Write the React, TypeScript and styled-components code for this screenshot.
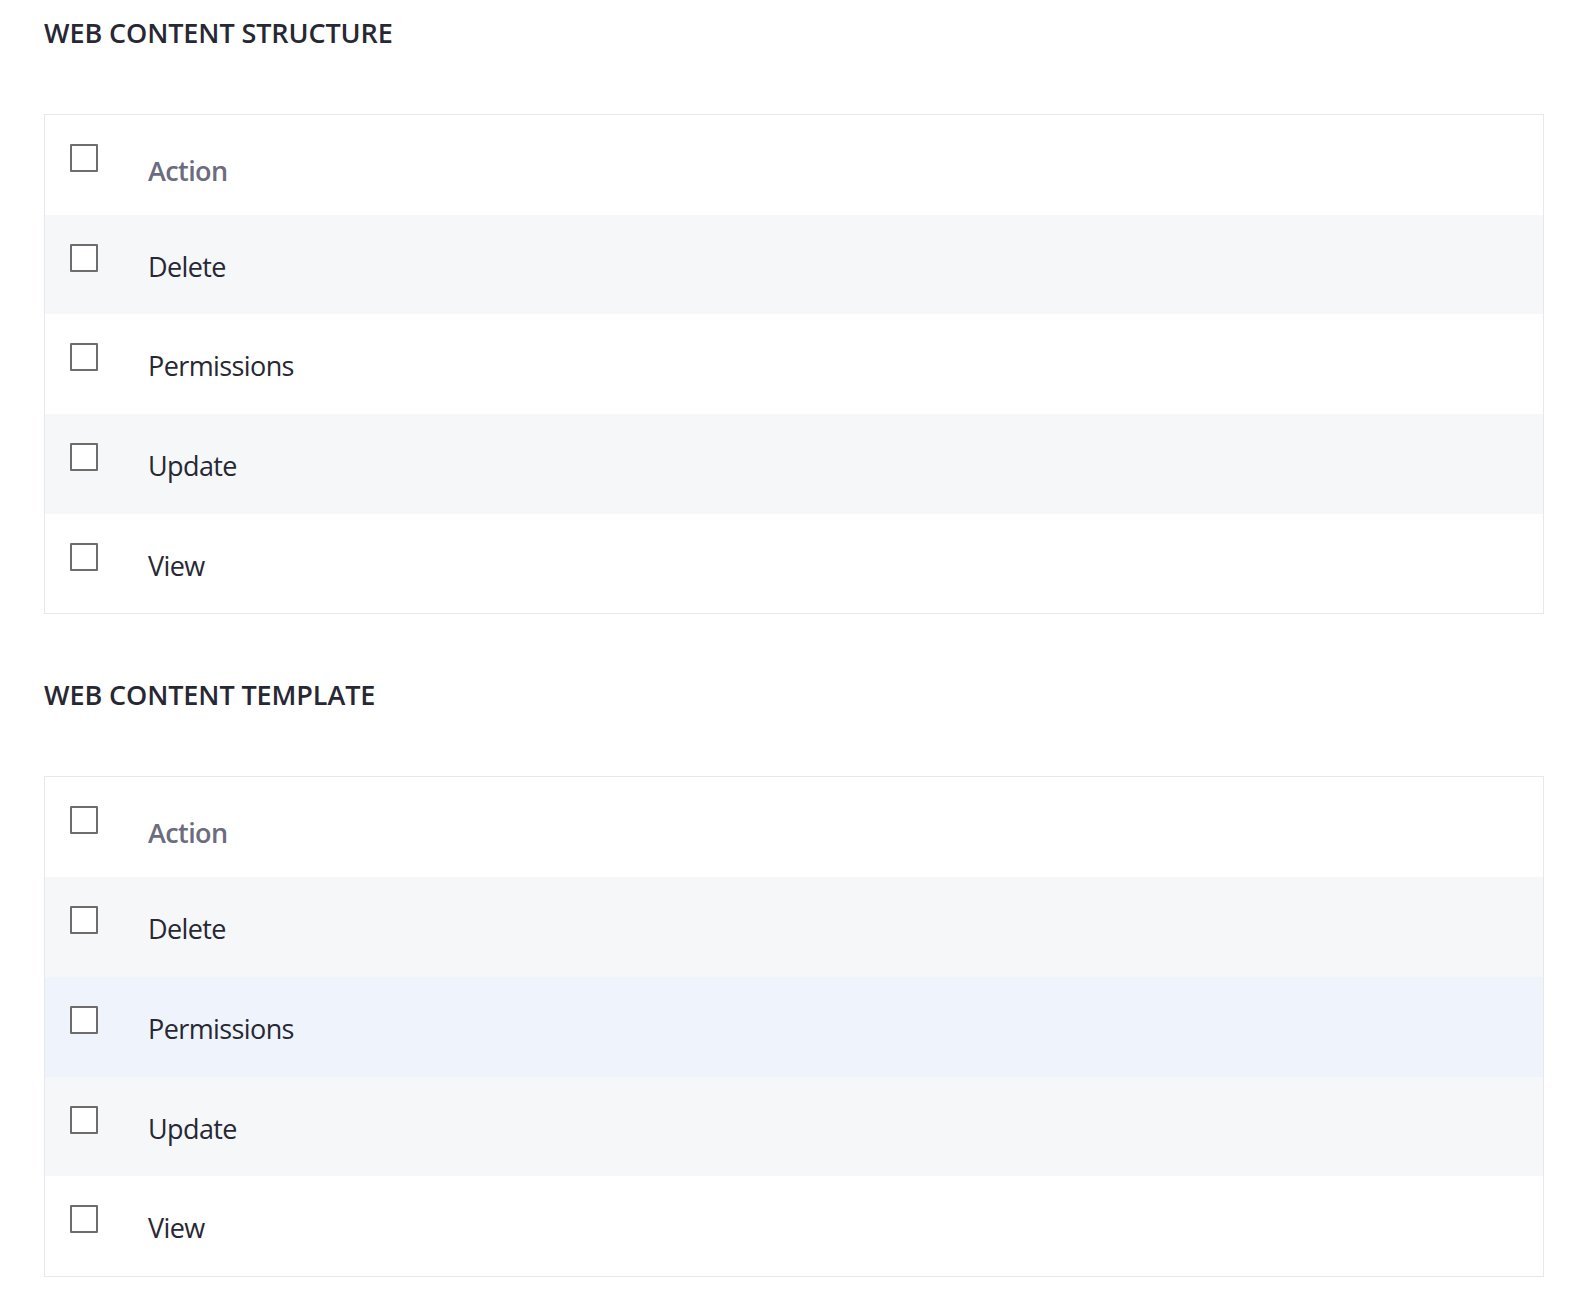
import React from "react";
import styled, { createGlobalStyle } from "styled-components";

const GlobalStyle = createGlobalStyle`
  html, body {
    margin: 0;
    padding: 0;
    background: #ffffff;
    font-family: "Open Sans", "Noto Sans", sans-serif;
    color: #272833;
  }
`;

const Page = styled.div`
  padding: 0 38px 40px 44px;
  width: 1500px;
`;

const Section = styled.section`
  display: flex;
  flex-direction: column;
`;

const Title = styled.h2`
  margin: 0;
  padding-top: 15px;
  height: 114px;
  box-sizing: border-box;
  font-size: 27px;
  line-height: 36px;
  font-weight: 600;
  letter-spacing: -0.1px;
  color: #272833;
`;

const Table = styled.div`
  border: 1px solid #e7e7ed;
  display: flex;
  flex-direction: column;
  margin-bottom: 48px;
`;

const Row = styled.div<{ $variant?: "plain" | "striped" | "hover" }>`
  display: flex;
  align-items: flex-start;
  height: 99.7px;
  box-sizing: border-box;
  padding: 29px 0 0 25px;
  background: ${(p) =>
    p.$variant === "striped" ? "#f6f7f9" : p.$variant === "hover" ? "#eff4fc" : "#ffffff"};
`;

const Box = styled.span`
  flex: none;
  width: 28px;
  height: 28px;
  box-sizing: border-box;
  border: 2px solid #6d6d6d;
  border-radius: 1px;
  background: #ffffff;
`;

const Label = styled.span<{ $head?: boolean }>`
  margin-left: 50px;
  margin-top: ${(p) => (p.$head ? "9px" : "5px")};
  font-size: 27px;
  line-height: 36px;
  font-weight: ${(p) => (p.$head ? 600 : 400)};
  color: ${(p) => (p.$head ? "#6b6c7e" : "#272833")};
  letter-spacing: -0.6px;
`;

type RowDef = { label: string; variant: "plain" | "striped" | "hover" };

const PermTable = ({ title, rows }: { title: string; rows: RowDef[] }) => (
  <Section>
    <Title>{title}</Title>
    <Table>
      <Row $variant="plain">
        <Box />
        <Label $head>Action</Label>
      </Row>
      {rows.map((r) => (
        <Row key={r.label} $variant={r.variant}>
          <Box />
          <Label>{r.label}</Label>
        </Row>
      ))}
    </Table>
  </Section>
);

export default function App() {
  return (
    <>
      <GlobalStyle />
      <Page>
        <PermTable
          title="WEB CONTENT STRUCTURE"
          rows={[
            { label: "Delete", variant: "striped" },
            { label: "Permissions", variant: "plain" },
            { label: "Update", variant: "striped" },
            { label: "View", variant: "plain" },
          ]}
        />
        <PermTable
          title="WEB CONTENT TEMPLATE"
          rows={[
            { label: "Delete", variant: "striped" },
            { label: "Permissions", variant: "hover" },
            { label: "Update", variant: "striped" },
            { label: "View", variant: "plain" },
          ]}
        />
      </Page>
    </>
  );
}
